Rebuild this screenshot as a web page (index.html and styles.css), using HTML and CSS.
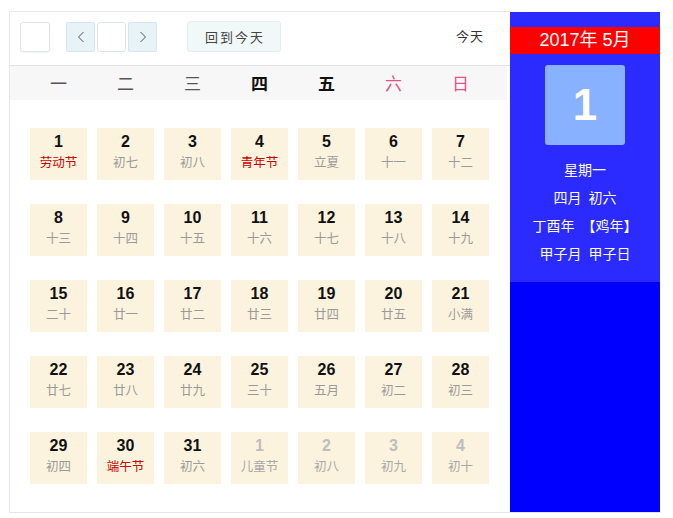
FILE: index.html
```html
<!DOCTYPE html>
<html lang="zh-CN">
<head>
<meta charset="utf-8">
<title>万年历</title>
<link rel="stylesheet" href="styles.css">
</head>
<body>
<div class="wrap">
  <div class="cal">
    <div class="toolbar">
      <div class="btn sq"></div>
      <div class="group">
        <div class="btn nav"><svg width="8" height="12" viewBox="0 0 8 12"><polyline points="6.5,1 1.5,6 6.5,11" fill="none" stroke="#555" stroke-width="1"/></svg></div>
        <div class="btn mid"></div>
        <div class="btn nav"><svg width="8" height="12" viewBox="0 0 8 12"><polyline points="1.5,1 6.5,6 1.5,11" fill="none" stroke="#555" stroke-width="1"/></svg></div>
      </div>
      <div class="btn today">回到今天</div>
      <div class="spacer"></div>
      <div class="today-label">今天</div>
    </div>
    <div class="weekdays">
      <span>一</span><span>二</span><span>三</span><span class="strong">四</span><span class="strong">五</span><span class="weekend">六</span><span class="weekend">日</span>
    </div>
    <div class="days">
      <div class="day"><b>1</b><i class="fest">劳动节</i></div>
      <div class="day"><b>2</b><i>初七</i></div>
      <div class="day"><b>3</b><i>初八</i></div>
      <div class="day"><b>4</b><i class="fest">青年节</i></div>
      <div class="day"><b>5</b><i>立夏</i></div>
      <div class="day"><b>6</b><i>十一</i></div>
      <div class="day"><b>7</b><i>十二</i></div>

      <div class="day"><b>8</b><i>十三</i></div>
      <div class="day"><b>9</b><i>十四</i></div>
      <div class="day"><b>10</b><i>十五</i></div>
      <div class="day"><b>11</b><i>十六</i></div>
      <div class="day"><b>12</b><i>十七</i></div>
      <div class="day"><b>13</b><i>十八</i></div>
      <div class="day"><b>14</b><i>十九</i></div>

      <div class="day"><b>15</b><i>二十</i></div>
      <div class="day"><b>16</b><i>廿一</i></div>
      <div class="day"><b>17</b><i>廿二</i></div>
      <div class="day"><b>18</b><i>廿三</i></div>
      <div class="day"><b>19</b><i>廿四</i></div>
      <div class="day"><b>20</b><i>廿五</i></div>
      <div class="day"><b>21</b><i>小满</i></div>

      <div class="day"><b>22</b><i>廿七</i></div>
      <div class="day"><b>23</b><i>廿八</i></div>
      <div class="day"><b>24</b><i>廿九</i></div>
      <div class="day"><b>25</b><i>三十</i></div>
      <div class="day"><b>26</b><i>五月</i></div>
      <div class="day"><b>27</b><i>初二</i></div>
      <div class="day"><b>28</b><i>初三</i></div>

      <div class="day"><b>29</b><i>初四</i></div>
      <div class="day"><b>30</b><i class="fest">端午节</i></div>
      <div class="day"><b>31</b><i>初六</i></div>
      <div class="day other"><b>1</b><i>儿童节</i></div>
      <div class="day other"><b>2</b><i>初八</i></div>
      <div class="day other"><b>3</b><i>初九</i></div>
      <div class="day other"><b>4</b><i>初十</i></div>
    </div>
  </div>
  <div class="panel">
    <div class="panel-top">
      <div class="ym">2017年 5月</div>
      <div class="bigday">1</div>
      <div class="info">
        <div>星期一</div>
        <div>四月 初六</div>
        <div>丁酉年 【鸡年】</div>
        <div>甲子月 甲子日</div>
      </div>
    </div>
  </div>
</div>
</body>
</html>
```
FILE: styles.css
```css
html, body {
  margin: 0;
  padding: 0;
  background: #fff;
}
body {
  font-family: "Noto Sans CJK SC", "Noto Sans", sans-serif;
}
.wrap {
  margin: 11px 0 0 9px;
  width: 651px;
  display: flex;
  border-left: 1px solid #e6e6e6;
  border-bottom: 1px solid #e6e6e6;
}
.cal {
  width: 500px;
  border-top: 1px solid #e8e8e8;
}
.toolbar {
  height: 54px;
  box-sizing: border-box;
  padding: 10px 26px 0 10px;
  display: flex;
  align-items: flex-start;
  border-bottom: 1px solid #e2e2e2;
}
.btn {
  box-sizing: border-box;
  height: 30px;
  border: 1px solid #dfe5ea;
  border-radius: 3px;
  display: flex;
  align-items: center;
  justify-content: center;
}
.sq {
  width: 30px;
  background: #fff;
  box-shadow: 0 1px 2px rgba(0,0,0,0.06);
}
.group {
  display: flex;
  gap: 2px;
  margin-left: 16px;
}
.nav {
  width: 29px;
  background: #e7f3f7;
  border-color: #d7e5ec;
  border-radius: 2px;
}
.mid {
  width: 29px;
  background: #fff;
  border-color: #dde4ea;
}
.today {
  margin-left: 30px;
  margin-top: -1px;
  width: 94px;
  height: 31px;
  background: #f1f8f8;
  border-color: #e4eeee;
  font-size: 13px;
  letter-spacing: 2px;
  color: #444;
  padding-left: 2px;
}
.spacer {
  flex: 1;
}
.today-label {
  font-size: 13px;
  letter-spacing: 1px;
  color: #333;
  line-height: 30px;
  margin-top: -1px;
}
.weekdays {
  height: 34px;
  margin-right: 3px;
  background: #f7f7f7;
  display: grid;
  grid-template-columns: repeat(7, 57px);
  column-gap: 10px;
  padding-left: 20px;
  align-items: center;
}
.weekdays span {
  text-align: center;
  font-size: 17px;
  color: #555;
  line-height: 34px;
}
.weekdays .strong {
  color: #111;
  font-weight: bold;
}
.weekdays .weekend {
  color: #e4508a;
}
.days {
  display: grid;
  grid-template-columns: repeat(7, 57px);
  grid-auto-rows: 52px;
  column-gap: 10px;
  row-gap: 24px;
  padding: 28px 0 28px 20px;
}
.day {
  background: #fcf3de;
  box-sizing: border-box;
  padding-top: 4px;
  text-align: center;
}
.day b {
  display: block;
  font-family: "Liberation Sans", "DejaVu Sans", sans-serif;
  font-weight: bold;
  font-size: 16px;
  line-height: 20px;
  color: #111;
}
.day i {
  display: block;
  font-style: normal;
  font-size: 12.5px;
  line-height: 20px;
  color: #9a9a9a;
}
.day i.fest {
  color: #cc0000;
}
.day.other b {
  color: #bdbdbd;
}
.day.other i {
  color: #a8a8a8;
}
.panel {
  width: 150px;
  margin-top: 1px;
  background: #0000ff;
}
.panel-top {
  background: #2b2bff;
  padding: 15px 0 15px 0;
  color: #fff;
  text-align: center;
}
.ym {
  background: #ff0000;
  height: 27px;
  line-height: 27px;
  font-size: 18px;
  font-family: "Liberation Sans", "Noto Sans CJK SC", sans-serif;
}
.bigday {
  width: 80px;
  height: 80px;
  margin: 11px auto 0;
  background: #88b1ff;
  border-radius: 3px;
  font-family: "Liberation Sans", sans-serif;
  font-weight: bold;
  font-size: 44px;
  line-height: 80px;
}
.info {
  margin-top: 10px;
  font-size: 14px;
  line-height: 28px;
  word-spacing: 4px;
}
```
